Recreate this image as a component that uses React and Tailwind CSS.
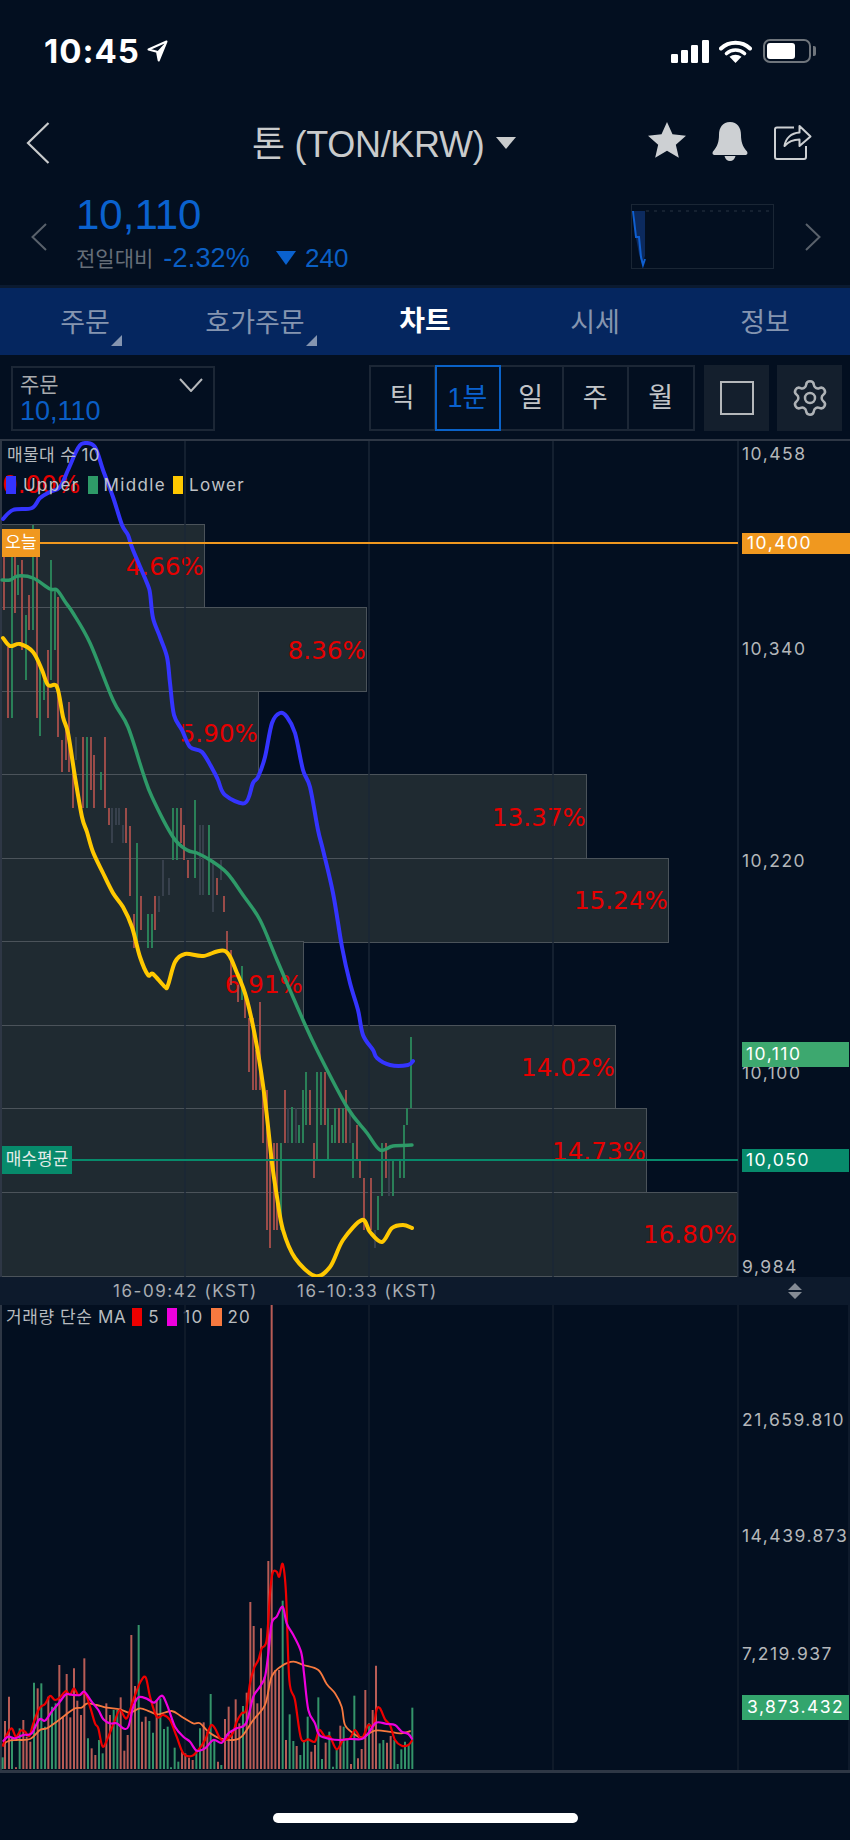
import React from "react";
import { Settings } from "lucide-react";

// Turns a list of points into a smooth Catmull-Rom path.
function smooth(pts) {
  let d = `M${pts[0][0]} ${pts[0][1]}`;
  for (let i = 0; i < pts.length - 1; i++) {
    const p0 = pts[i - 1] || pts[i];
    const p1 = pts[i];
    const p2 = pts[i + 1];
    const p3 = pts[i + 2] || p2;
    const c1x = p1[0] + (p2[0] - p0[0]) / 6;
    const c1y = p1[1] + (p2[1] - p0[1]) / 6;
    const c2x = p2[0] - (p3[0] - p1[0]) / 6;
    const c2y = p2[1] - (p3[1] - p1[1]) / 6;
    d += `C${c1x.toFixed(1)} ${c1y.toFixed(1)} ${c2x.toFixed(1)} ${c2y.toFixed(1)} ${p2[0]} ${p2[1]}`;
  }
  return d;
}

// Bollinger bands, page coordinates.
const upper = [[3,519],[13,510],[32,508],[40,498],[50,492],[60,487],[68,470],[78,448],[85,443],[95,447],[103,470],[113,497],[122,525],[128,535],[133,550],[147,583],[150,593],[153,618],[160,637],[167,657],[170,683],[174,715],[182,730],[190,747],[202,752],[213,770],[218,780],[225,795],[245,803],[253,783],[258,777],[265,757],[272,723],[280,713],[287,717],[295,733],[303,770],[310,787],[318,830],[323,850],[333,893],[342,947],[350,983],[358,1010],[363,1035],[373,1050],[377,1058],[390,1065],[408,1065],[413,1061]];
const middle = [[2,580],[10,580],[18,576],[33,578],[50,589],[57,590],[66,603],[73,613],[90,643],[113,700],[128,727],[143,773],[152,797],[173,837],[187,850],[197,853],[210,860],[227,873],[243,895],[260,920],[277,960],[303,1020],[317,1050],[347,1107],[367,1133],[380,1150],[393,1146],[412,1145]];
const lower = [[3,638],[10,646],[20,644],[33,652],[42,670],[48,685],[57,687],[63,717],[68,733],[75,777],[82,817],[87,832],[93,852],[103,873],[113,893],[123,907],[132,927],[140,957],[148,975],[153,974],[165,987],[168,985],[175,962],[185,954],[203,956],[225,951],[237,973],[247,1000],[257,1047],[265,1100],[272,1163],[277,1197],[283,1230],[295,1258],[315,1276],[330,1267],[343,1240],[362,1220],[370,1232],[382,1242],[392,1228],[403,1225],[412,1228]];

// Candle wicks: x, top, bottom, colour key.
const wicks = [[4,552,610,"r"],[8,647,718,"r"],[12,555,718,"g"],[15,555,613,"r"],[18,565,595,"g"],[22,560,650,"r"],[26,615,680,"g"],[29,595,630,"r"],[33,525,630,"g"],[37,555,718,"r"],[40,665,736,"g"],[44,680,700,"g"],[48,650,718,"r"],[51,560,680,"g"],[55,590,650,"g"],[58,597,737,"r"],[62,740,772,"r"],[66,725,760,"r"],[69,702,772,"r"],[73,770,808,"r"],[76,737,760,"k"],[83,737,808,"r"],[87,737,808,"g"],[91,737,790,"r"],[94,755,808,"r"],[101,772,790,"g"],[105,737,808,"r"],[109,808,825,"r"],[112,808,843,"k"],[116,808,825,"k"],[119,808,825,"k"],[123,825,843,"k"],[126,808,843,"r"],[130,826,896,"r"],[137,843,942,"g"],[141,896,930,"r"],[134,914,948,"r"],[148,914,948,"g"],[152,914,948,"g"],[155,896,930,"r"],[159,896,912,"k"],[163,860,896,"k"],[169,878,895,"k"],[173,808,860,"g"],[177,808,860,"g"],[181,808,843,"r"],[184,825,860,"r"],[188,860,878,"r"],[195,800,878,"g"],[200,825,895,"k"],[203,825,895,"k"],[209,825,895,"g"],[213,860,912,"k"],[217,878,895,"r"],[221,860,880,"k"],[224,896,912,"r"],[227,931,950,"r"],[231,950,985,"r"],[242,966,1000,"g"],[238,985,1002,"r"],[245,990,1018,"r"],[249,1018,1072,"r"],[253,1018,1090,"r"],[260,1002,1090,"r"],[256,1050,1090,"r"],[263,1090,1143,"r"],[267,1090,1230,"r"],[270,1143,1248,"r"],[274,1143,1230,"r"],[277,1143,1230,"r"],[281,1143,1230,"g"],[285,1090,1143,"r"],[288,1108,1143,"k"],[292,1107,1143,"g"],[296,1108,1143,"k"],[299,1125,1143,"g"],[303,1090,1143,"g"],[306,1072,1125,"g"],[310,1090,1125,"r"],[314,1143,1178,"r"],[317,1072,1160,"g"],[321,1072,1125,"g"],[325,1072,1125,"r"],[328,1108,1160,"g"],[332,1125,1143,"g"],[335,1108,1143,"g"],[339,1108,1143,"r"],[343,1108,1143,"g"],[346,1090,1143,"r"],[350,1108,1143,"k"],[353,1143,1178,"g"],[357,1125,1160,"r"],[360,1160,1178,"r"],[364,1178,1230,"r"],[371,1178,1230,"r"],[375,1230,1248,"k"],[378,1196,1230,"g"],[382,1143,1196,"g"],[386,1143,1178,"r"],[389,1160,1196,"k"],[393,1160,1196,"g"],[400,1160,1178,"g"],[404,1125,1178,"g"],[407,1108,1125,"g"],[411,1037,1108,"g"]];

const wickColor = { r: "#a9504c", g: "#2c8a5d", k: "#3a4350" };

// Volume bars as x and top edge in thirds of a pixel above the panel's lower part.
const volumes = [[8,592,"g"],[15,483,"r"],[27,410,"r"],[36,530,"g"],[48,622,"r"],[59,505,"g"],[70,480,"r"],[80,530,"r"],[91,545,"r"],[102,368,"g"],[113,385,"r"],[124,370,"g"],[135,500,"g"],[145,410,"r"],[156,440,"g"],[167,430,"g"],[178,315,"r"],[189,470,"r"],[200,342,"r"],[211,472,"r"],[222,325,"r"],[232,422,"r"],[243,465,"r"],[253,295,"r"],[264,535,"g"],[275,565,"r"],[286,585,"r"],[297,540,"g"],[308,580,"g"],[319,430,"r"],[330,465,"r"],[341,450,"g"],[352,450,"g"],[362,412,"r"],[373,572,"r"],[383,525,"r"],[394,225,"r"],[405,378,"r"],[416,195,"g"],[426,485,"r"],[437,470,"r"],[448,483,"g"],[459,518,"g"],[470,420,"r"],[481,415,"g"],[492,507,"g"],[503,500,"g"],[513,622,"g"],[524,563,"g"],[535,605,"g"],[546,575,"r"],[556,580,"r"],[567,593,"r"],[578,600,"r"],[589,570,"g"],[600,505,"g"],[611,487,"r"],[622,515,"r"],[632,402,"g"],[643,540,"g"],[654,605,"r"],[664,615,"g"],[675,477,"r"],[686,440,"r"],[696,515,"r"],[707,418,"r"],[718,490,"r"],[729,438,"g"],[740,398,"r"],[751,126,"r"],[761,198,"r"],[772,430,"r"],[783,205,"r"],[794,350,"r"],[805,3,"r"],[815,-765,"r"],[826,330,"r"],[837,330,"r"],[848,122,"g"],[858,540,"r"],[869,463,"g"],[880,543,"g"],[890,558,"r"],[901,585,"g"],[912,540,"g"],[923,470,"g"],[934,575,"r"],[945,555,"r"],[955,412,"g"],[966,597,"g"],[977,548,"r"],[988,515,"g"],[999,620,"g"],[1010,570,"g"],[1021,497,"r"],[1031,500,"g"],[1042,535,"g"],[1053,612,"r"],[1063,407,"g"],[1074,595,"r"],[1085,567,"r"],[1096,390,"r"],[1107,490,"g"],[1118,450,"r"],[1128,317,"r"],[1139,550,"g"],[1150,540,"g"],[1161,548,"r"],[1172,528,"r"],[1183,540,"g"],[1193,612,"g"],[1204,568,"g"],[1215,545,"g"],[1226,555,"g"],[1237,443,"g"]];

const ma5 = [[8,560],[20,525],[35,505],[48,530],[62,512],[75,515],[88,528],[100,490],[118,445],[135,432],[150,408],[165,420],[180,412],[198,393],[210,405],[222,385],[235,405],[255,400],[270,440],[285,490],[295,505],[308,560],[325,530],[345,480],[360,450],[380,475],[400,420],[420,368],[437,352],[450,410],[470,470],[490,465],[510,480],[530,530],[550,580],[575,588],[595,570],[615,540],[632,497],[645,505],[665,540],[695,525],[710,485],[725,460],[738,450],[750,370],[762,325],[775,300],[785,265],[800,240],[810,100],[818,38],[830,35],[838,50],[848,12],[858,100],[868,360],[885,420],[903,535],[925,538],[945,545],[958,510],[975,530],[990,530],[1010,568],[1030,540],[1050,535],[1065,510],[1085,535],[1105,495],[1120,500],[1130,448],[1140,445],[1155,478],[1170,495],[1185,540],[1205,557],[1225,555],[1237,540]];
const ma10 = [[8,545],[25,530],[45,535],[70,525],[95,520],[118,478],[135,482],[155,455],[180,425],[198,403],[220,405],[240,405],[253,395],[275,425],[295,450],[310,478],[330,490],[350,490],[370,505],[385,500],[400,440],[415,412],[440,416],[462,428],[480,410],[490,410],[505,445],[525,500],[550,530],[570,545],[590,572],[615,565],[640,540],[665,548],[685,520],[710,505],[738,490],[760,410],[780,380],[795,350],[805,280],[815,190],[830,170],[848,140],[860,190],[880,225],[903,275],[912,340],[925,450],[945,490],[958,525],[990,537],[1020,540],[1050,537],[1085,537],[1105,520],[1128,488],[1160,492],[1185,495],[1205,515],[1225,522],[1237,538]];
const ma20 = [[8,555],[25,543],[50,540],[90,537],[120,510],[140,505],[170,485],[200,462],[225,445],[245,443],[262,430],[290,435],[320,443],[360,448],[390,458],[420,445],[450,455],[475,463],[515,453],[545,470],[580,490],[600,490],[625,515],[660,535],[700,540],[725,530],[760,480],[795,435],[815,350],[845,318],[880,305],[910,315],[955,330],[980,372],[1005,400],[1025,440],[1035,495],[1060,520],[1085,532],[1125,512],[1165,515],[1200,520],[1232,513]];

const toPage = (pts) => pts.map(([x, y]) => [x / 3, 1560 + y / 3]);

// Volume-by-price rows, top to bottom.
const profile = [
  { width: 203, pct: "4.66%" },
  { width: 365, pct: "8.36%" },
  { width: 257, pct: "5.90%" },
  { width: 585, pct: "13.37%" },
  { width: 667, pct: "15.24%" },
  { width: 302, pct: "6.91%" },
  { width: 614, pct: "14.02%" },
  { width: 645, pct: "14.73%" },
  { width: 736, pct: "16.80%" },
];

const tabs = ["주문", "호가주문", "차트", "시세", "정보"];
const periods = ["틱", "1분", "일", "주", "월"];

function StatusBar() {
  return (
    <div className="h-[102px] shrink-0 flex items-center pl-[44px] pr-[34px] text-white">
      <span className="[font-family:Inter,sans-serif] text-[33px] font-bold leading-none tracking-[1px]">10:45</span>
      <svg className="ml-[7px]" width="21" height="22" viewBox="0 0 21 22" fill="none">
        <path d="M19.5 1.5 1.5 9.5l8.5 2.2 1.7 8.8z" stroke="#fff" strokeWidth="2" strokeLinejoin="round" />
        <path d="M19.5 1.5 10 11.7l1.7 8.8z" fill="#fff" />
      </svg>
      <div className="ml-auto flex items-center">
        <svg width="38" height="23" viewBox="0 0 38 23" fill="#fff">
          <rect x="0" y="14" width="7" height="9" rx="1.2" />
          <rect x="10" y="10" width="7" height="13" rx="1.2" />
          <rect x="20" y="5" width="7" height="18" rx="1.2" />
          <rect x="31" y="0" width="7" height="23" rx="1.2" />
        </svg>
        <svg className="ml-[10px]" width="33" height="23" viewBox="0 0 33 23" fill="none">
          <path d="M2 8.5C10 .8 23 .8 31 8.5" stroke="#fff" strokeWidth="4" strokeLinecap="round" />
          <path d="M7.5 13.5c5-4.6 13-4.6 18 0" stroke="#fff" strokeWidth="3.6" strokeLinecap="round" />
          <path d="m16.5 23-6-6.2c3.4-2.8 8.6-2.8 12 0z" fill="#fff" />
        </svg>
        <div className="ml-[11px] flex items-center">
          <div className="w-[48px] h-[24px] rounded-[7px] border-2 border-[#6f757c] p-[2px] pr-[14px]">
            <div className="w-full h-full rounded-[3px] bg-white" />
          </div>
          <div className="ml-[2px] w-[3px] h-[10px] rounded-r-[2px] bg-[#6f757c]" />
        </div>
      </div>
    </div>
  );
}

function Header() {
  return (
    <div className="h-[82px] shrink-0 relative flex items-center pl-[252px] text-[#c9cbcc]">
      <svg className="absolute left-[26px] top-[20px]" width="24" height="42" viewBox="0 0 24 42" fill="none">
        <path d="M22.5 1 2 21l20.5 20" stroke="#c9cbcc" strokeWidth="2.2" />
      </svg>
      <span className="mt-[3px] text-[36px] leading-none tracking-[-0.3px]">톤 (TON/KRW)</span>
      <svg className="ml-[12px]" width="20" height="12" viewBox="0 0 20 12" fill="#c9cbcc">
        <path d="M0 0h20L10 12z" />
      </svg>
      <div className="absolute right-[38px] top-[19px] flex items-center">
        <svg width="40" height="40" viewBox="0 0 24 24" fill="#cdd0d3">
          <path d="M12 .6l3.3 7.4 8.1.8-6.1 5.4 1.8 7.9-7.1-4.2-7.1 4.2 1.8-7.9L.6 8.8l8.1-.8z" />
        </svg>
        <svg className="ml-[25px]" width="36" height="39" viewBox="0 0 36 39" fill="#cdd0d3">
          <path d="M18 0c7.4 0 11 5.6 11 13 0 6.5 1.6 11.5 5.6 16 1.3 1.5 1.4 4-1.6 4H3c-3 0-2.9-2.5-1.6-4C5.4 24.500 7 19.500 7 13 7 5.600 10.600 0 18 0z" />
          <path d="M12.500 34h11c-.6 3-2.900 5-5.500 5s-4.900-2-5.500-5z" />
        </svg>
        <svg className="ml-[26px]" width="38" height="39" viewBox="0 0 38 39" fill="none" stroke="#cdd0d3" strokeWidth="2">
          <path d="M20 5.500H3a2 2 0 0 0-2 2V35a2 2 0 0 0 2 2h27a2 2 0 0 0 2-2V24" />
          <path d="M10.500 24c1-7.500 6.500-13 15-13.500V4l11 10.500-11 9.500v-6.500C18 17.500 14 20 10.500 24z" strokeLinejoin="round" />
        </svg>
      </div>
    </div>
  );
}

function PriceRow() {
  return (
    <div className="h-[101px] shrink-0 flex pl-[31px]">
      <svg className="mt-[39px]" width="16" height="28" viewBox="0 0 16 28" fill="none">
        <path d="M15 1 1.500 14 15 27" stroke="#59616b" strokeWidth="2" />
      </svg>
      <div className="ml-[29px] pt-[11px]">
        <div className="text-[42px] leading-[40px] text-[#0a62cf]">10,110</div>
        <div className="mt-[8px] h-[30px] flex items-center leading-none">
          <span className="text-[#666e78] text-[21px]">전일대비</span>
          <span className="ml-[10px] text-[#0b5fc4] text-[27px] tracking-[0.2px]">-2.32%</span>
          <svg className="ml-[26px]" width="20" height="14" viewBox="0 0 20 14" fill="#0a62cf">
            <path d="M0 0h20L10 14z" />
          </svg>
          <span className="ml-[9px] text-[#0b5fc4] text-[26px]">240</span>
        </div>
      </div>
      <div className="ml-auto mt-[20px] h-[65px] w-[143px] mr-[31px] border border-[#1a2635] relative overflow-hidden">
        <svg className="absolute left-0 top-0" width="143" height="65" viewBox="632 204 143 65">
          <path d="M634 210h11v45l-3 8-3-10-3-16z" fill="#0c2a5e" />
          <path d="M646 210h126" stroke="#1c2837" strokeWidth="1.500" strokeDasharray="3 5" />
          <path d="M633 210l3 26h3l2 20 2 8 2-6" fill="none" stroke="#0f5fd0" strokeWidth="2" />
        </svg>
      </div>
      <svg className="mt-[39px] mr-[29px]" width="16" height="28" viewBox="0 0 16 28" fill="none">
        <path d="M1 1 14.500 14 1 27" stroke="#59616b" strokeWidth="2" />
      </svg>
    </div>
  );
}

function Tabs() {
  return (
    <div className="shrink-0 border-t-[3px] border-[#0b1a30]">
      <div className="h-[67px] grid grid-cols-5 bg-[#05265f]">
        {tabs.map((t, i) => (
          <div key={t} className="relative flex items-center justify-center">
            <span className={i === 2 ? "text-[28px] font-bold text-white leading-none" : "mt-[3px] text-[27px] text-[#8595b0] leading-none"}>{t}</span>
            {i === 0 && <div className="absolute left-[111px] top-[47px] w-0 h-0 border-l-[11px] border-l-transparent border-b-[11px] border-b-[#8595b0]" />}
            {i === 1 && <div className="absolute left-[136px] top-[47px] w-0 h-0 border-l-[11px] border-l-transparent border-b-[11px] border-b-[#8595b0]" />}
          </div>
        ))}
      </div>
    </div>
  );
}

function Toolbar() {
  return (
    <div className="h-[84px] shrink-0 flex items-center pl-[11px] pt-[2px]">
      <div className="w-[204px] h-[65px] border-2 border-[#1c2736] pl-[7px] pt-[5px] relative">
        <div className="text-[21px] leading-[24px] text-[#a8abae]">주문</div>
        <div className="text-[27px] leading-[28px] text-[#0a5ec4]">10,110</div>
        <svg className="absolute right-[10px] top-[10px]" width="24" height="14" viewBox="0 0 24 14" fill="none">
          <path d="M1 1l11 12L23 1" stroke="#b5b8bb" strokeWidth="2" />
        </svg>
      </div>
      <div className="ml-[154px] flex h-[66px] border-2 border-[#1c2736]">
        {periods.map((p, i) => (
          <div
            key={p}
            className={
              i === 1
                ? "w-[66px] -my-[2px] -mx-px border-2 border-[#0a62c8] text-[#0a62cf] flex items-center justify-center text-[27px]"
                : "w-[64.500px] flex items-center justify-center text-[27px] text-[#c2c5c8] border-r-2 border-[#1c2736] last:border-r-0"
            }
          >
            {p}
          </div>
        ))}
      </div>
      <div className="ml-[9px] w-[65px] h-[66px] bg-[#141f2d] flex items-center justify-center">
        <div className="w-[34px] h-[34px] border-2 border-[#b5b8bb]" />
      </div>
      <div className="ml-[8px] w-[65px] h-[66px] bg-[#141f2d] flex items-center justify-center">
        <Settings size={40} strokeWidth={1.5} color="#aeb2b6" />
      </div>
    </div>
  );
}

function AxisLabel({ className, children }) {
  return <div className={"absolute left-[740px] -translate-y-1/2 leading-none text-[17.500px] tracking-[1.500px] text-[#b4b7ba] " + className}>{children}</div>;
}

function LegendKey({ className }) {
  return <span className={"inline-block w-[10px] h-[18px] " + className} />;
}

function MainChart() {
  return (
    <div className="h-[838px] shrink-0 relative border-t-2 border-l-2 border-[#2e3745] [font-family:Inter,'Noto_Sans_CJK_KR',sans-serif]">
      <div className="flex flex-col [font-family:'DejaVu_Sans',sans-serif]">
        <div className="h-[84px] flex items-center justify-start pt-[4px]">
          <span className="text-[24.500px] leading-none tracking-[0.1px] text-[#e60000]">0.00%</span>
        </div>
        {profile.map((r) => (
          <div
            key={r.pct}
            className="h-[85px] -mt-[1.500px] first:mt-0 flex items-center justify-end pt-[3px] bg-[#1f2a31] border-[1.500px] border-l-0 border-[#4b535a] box-border"
            style={{ width: r.width }}
          >
            <span className="text-[24.500px] leading-none tracking-[0.1px] text-[#e60000]">{r.pct}</span>
          </div>
        ))}
      </div>

      <svg className="absolute left-[-2px] top-0" width="850" height="836" viewBox="0 441 850 836" fill="none">
        {[185, 369, 553, 738].map((x) => (
          <line key={x} x1={x} x2={x} y1="441" y2="1277" stroke="#1b2736" strokeWidth="1.500" />
        ))}
        {wicks.map(([x, a, b, c], i) => (
          <line key={i} x1={x} x2={x} y1={a} y2={b} stroke={wickColor[c]} strokeWidth="1.800" />
        ))}
        <path d={smooth(middle)} stroke="#2e9a68" strokeWidth="3.500" strokeLinecap="round" />
        <path d={smooth(upper)} stroke="#3434ff" strokeWidth="4" strokeLinecap="round" />
        <path d={smooth(lower)} stroke="#ffc800" strokeWidth="4" strokeLinecap="round" />
      </svg>

      <div className="absolute left-[5px] top-[14px] -translate-y-1/2 text-[17px] leading-none tracking-[0.4px] text-[#b7bbbf]">매물대 수 10</div>
      <div className="absolute left-[4px] top-[35px] flex items-center text-[17px] leading-none tracking-[1.350px] text-[#c0c3c6]">
        <LegendKey className="bg-[#3434ff]" />
        <span className="ml-[7px]">Upper</span>
        <LegendKey className="ml-[8px] bg-[#2e9a68]" />
        <span className="ml-[6px]">Middle</span>
        <LegendKey className="ml-[7px] bg-[#ffc800]" />
        <span className="ml-[6px]">Lower</span>
      </div>

      <AxisLabel className="top-[13px]">10,458</AxisLabel>
      <AxisLabel className="top-[208px]">10,340</AxisLabel>
      <AxisLabel className="top-[420px]">10,220</AxisLabel>
      <AxisLabel className="top-[632px]">10,100</AxisLabel>
      <AxisLabel className="top-[826px]">9,984</AxisLabel>

      {/* Today's price marker */}
      <div className="absolute left-[38px] top-[101px] w-[698px] h-[2px] bg-[#f0981f]" />
      <div className="absolute left-0 top-[88px] w-[38px] h-[28px] bg-[#f0981f] text-white text-[17px] flex items-center justify-center">오늘</div>
      <div className="absolute left-[740px] top-[92px] w-[108px] h-[21px] bg-[#f0981f] text-white text-[17.500px] tracking-[1.500px] flex items-center pl-[5px]">10,400</div>

      {/* Last price */}
      <div className="absolute left-[740px] top-[601px] w-[107px] h-[25px] bg-[#3da86f] text-white text-[17.500px] tracking-[1.500px] flex items-center pl-[4px]">10,110</div>

      {/* Average buy price marker */}
      <div className="absolute left-[70px] top-[718px] w-[666px] h-[2px] bg-[#078a6b]" />
      <div className="absolute left-0 top-[705px] w-[70px] h-[28px] bg-[#078a6b] text-[#e4ece9] text-[17px] flex items-center justify-center">매수평균</div>
      <div className="absolute left-[740px] top-[708px] w-[107px] h-[23px] bg-[#078a6b] text-white text-[17.500px] tracking-[1.500px] flex items-center pl-[4px]">10,050</div>
    </div>
  );
}

function TimeAxis() {
  return (
    <div className="h-[28px] shrink-0 flex items-center bg-[#0d1a2c] pl-[113px] pr-[47px] text-[17px] leading-none tracking-[1.550px] text-[#a9adb2] [font-family:Inter,sans-serif]">
      <span className="w-[184px]">16-09:42 (KST)</span>
      <span>16-10:33 (KST)</span>
      <svg className="ml-auto" width="16" height="16" viewBox="0 0 16 16" fill="#848b94">
        <path d="M1 7 8 0l7 7zM1 9l7 7 7-7z" />
      </svg>
    </div>
  );
}

function VolumeChart() {
  return (
    <div className="h-[468px] shrink-0 relative border-l-2 border-b-[3px] border-[#2e3745] [font-family:Inter,'Noto_Sans_CJK_KR',sans-serif]">
      <div className="relative flex items-center h-[24px] pl-[4px] text-[17px] leading-none tracking-[0.600px] text-[#b7bbbf]">
        <span>거래량 단순 MA</span>
        <span className="ml-[6px] w-[10px] h-[18px] bg-[#ee0000]" />
        <span className="ml-[6px]">5</span>
        <span className="ml-[8px] w-[10px] h-[18px] bg-[#ee00dd]" />
        <span className="ml-[6px] tracking-[1.300px]">10</span>
        <span className="ml-[8px] w-[11px] h-[18px] bg-[#f7793f]" />
        <span className="ml-[5px] tracking-[1.300px]">20</span>
      </div>

      <svg className="absolute left-[-2px] top-0" width="850" height="465" viewBox="0 1305 850 465" fill="none">
        {[185, 369, 553, 738].map((x) => (
          <line key={x} x1={x} x2={x} y1="1305" y2="1770" stroke="#141f2d" strokeWidth="1.500" />
        ))}
        <line x1="849" x2="849" y1="1305" y2="1770" stroke="#1b2736" strokeWidth="1" />
        {volumes.map(([x, t, c], i) => (
          <line key={i} x1={x / 3} x2={x / 3} y1={1560 + t / 3} y2="1769" stroke={c === "r" ? "#b85c56" : "#34946a"} strokeWidth="2" />
        ))}
        <path d={smooth(toPage(ma20))} stroke="#f7793f" strokeWidth="1.800" />
        <path d={smooth(toPage(ma5))} stroke="#ee0000" strokeWidth="2.200" />
        <path d={smooth(toPage(ma10))} stroke="#ee00dd" strokeWidth="2.200" />
      </svg>

      <AxisLabel className="top-[115px]">21,659.810</AxisLabel>
      <AxisLabel className="top-[231px]">14,439.873</AxisLabel>
      <AxisLabel className="top-[349px]">7,219.937</AxisLabel>
      <div className="absolute left-[740px] top-[390px] w-[107px] h-[25px] bg-[#33a56d] text-white text-[17.500px] tracking-[1.500px] flex items-center pl-[5px]">3,873.432</div>
    </div>
  );
}

export default function App() {
  return (
    <div className="w-[850px] h-[1840px] overflow-hidden flex flex-col bg-[#030f20] [font-family:'Liberation_Sans','Noto_Sans_CJK_KR',sans-serif]">
      <StatusBar />
      <Header />
      <PriceRow />
      <Tabs />
      <Toolbar />
      <MainChart />
      <TimeAxis />
      <VolumeChart />
      <div className="flex justify-center pt-[40px]">
        <div className="w-[305px] h-[10px] rounded-full bg-white" />
      </div>
    </div>
  );
}
